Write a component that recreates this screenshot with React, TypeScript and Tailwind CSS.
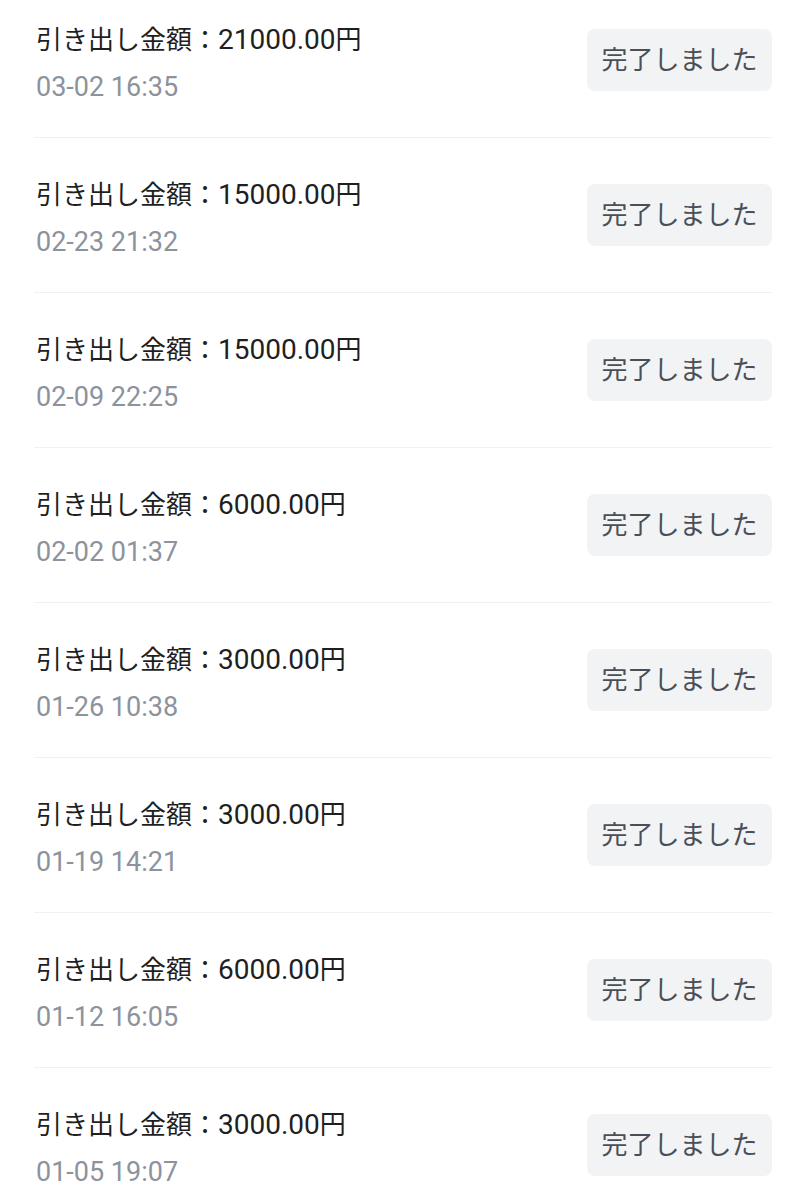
const records = [
  { amount: "21000.00", time: "03-02 16:35" },
  { amount: "15000.00", time: "02-23 21:32" },
  { amount: "15000.00", time: "02-09 22:25" },
  { amount: "6000.00", time: "02-02 01:37" },
  { amount: "3000.00", time: "01-26 10:38" },
  { amount: "3000.00", time: "01-19 14:21" },
  { amount: "6000.00", time: "01-12 16:05" },
  { amount: "3000.00", time: "01-05 19:07" },
];

export default function App() {
  return (
    <div
      className="h-[1200px] overflow-hidden bg-white"
      style={{ fontFamily: "Roboto, 'Noto Sans CJK JP', sans-serif" }}
    >
      <div className="-mt-[17px] pl-[36px] pr-[35px]">
        {records.map((r, i) => (
          <div
            key={i}
            className="-ml-[2px] flex h-[155px] items-center justify-between border-b border-[#f0f1f3] pl-[2px]"
          >
            <div className="flex flex-col self-start pt-[39px]">
              <span className="text-[26px] leading-[36px] text-[#1f1f1f]">
                引き出し金額：<span className="text-[28px]">{r.amount}</span>円
              </span>
              <span className="mt-[12px] text-[27px] leading-[34px] text-[#8c939d]">
                {r.time}
              </span>
            </div>
            <div className="flex h-[62px] w-[185px] items-center justify-center rounded-lg bg-[#f2f3f5] text-[26px] text-[#4a4f57]">
              完了しました
            </div>
          </div>
        ))}
      </div>
    </div>
  );
}
